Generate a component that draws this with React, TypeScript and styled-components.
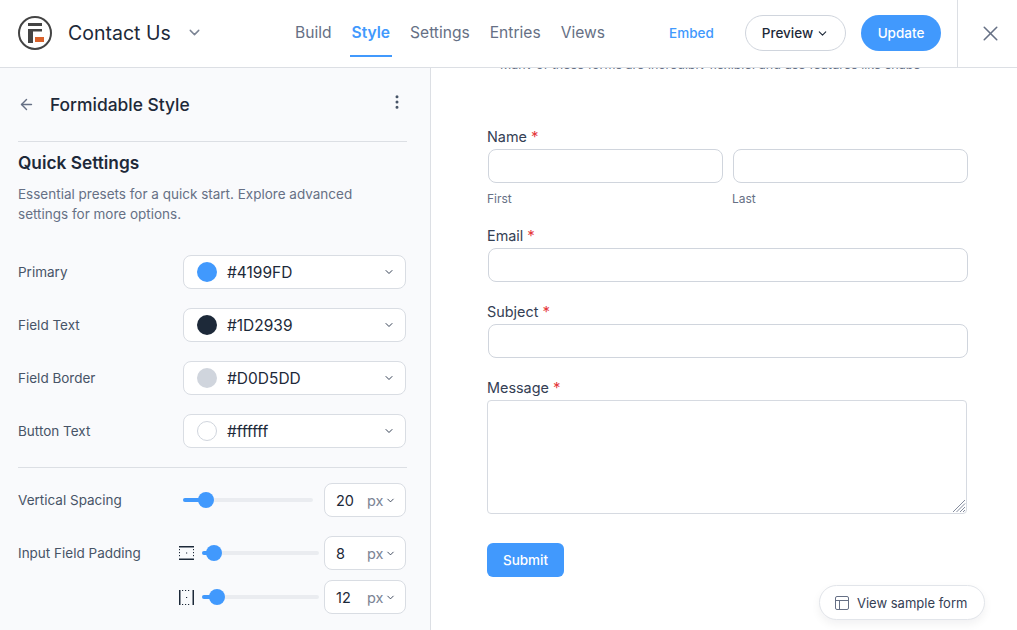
import * as React from 'react'
import styled, { createGlobalStyle } from 'styled-components'
import { ArrowLeft, ChevronDown, EllipsisVertical, X } from 'lucide-react'

const Global = createGlobalStyle`
  html, body {
    margin: 0;
    padding: 0;
    height: 100%;
    overflow: hidden;
    background: #fff;
    font-family: Inter, "Liberation Sans", sans-serif;
    color: #1d2939;
  }
  * { box-sizing: border-box; }
`

const Page = styled.div`
  width: 1017px;
  height: 630px;
  overflow: hidden;
  position: relative;
`
const Header = styled.header`
  height: 68px;
  display: flex;
  align-items: center;
  border-bottom: 1px solid #dcdfe4;
  background: #fff;
`
const Brand = styled.div`
  display: flex;
  align-items: center;
  width: 295px;
  padding-left: 18px;
  margin-bottom: 2px;
`
const FormName = styled.span`
  font-size: 19.5px;
  margin-left: 16px;
  color: #1d2939;
`
const NameChevron = styled(ChevronDown)`
  margin-left: 15px;
  color: #7b8494;
`
const Nav = styled.nav`
  display: flex;
  gap: 20px;
  height: 67px;
  width: 374px;
`
const NavItem = styled.a<{ $active?: boolean }>`
  display: flex;
  align-items: center;
  height: 50px;
  margin: 7px -2px 0;
  padding: 3px 2px 0;
  font-size: 15.6px;
  font-weight: ${p => (p.$active ? 600 : 400)};
  color: ${p => (p.$active ? '#4199fd' : '#667085')};
  border-bottom: 2px solid ${p => (p.$active ? '#4199fd' : 'transparent')};
`
const Actions = styled.div`
  display: flex;
  align-items: center;
  height: 67px;
  margin-bottom: 1px;
`
const Embed = styled.a`
  font-size: 13.5px;
  font-weight: 500;
  color: #4199fd;
  width: 76px;
`
const PillButton = styled.button`
  display: flex;
  align-items: center;
  justify-content: center;
  height: 36px;
  border-radius: 18px;
  font-family: inherit;
  font-size: 13.5px;
  font-weight: 500;
  padding: 0;
`
const PreviewButton = styled(PillButton)`
  width: 101px;
  gap: 3px;
  background: #fff;
  border: 1px solid #d0d5dd;
  color: #1d2939;
`
const UpdateButton = styled(PillButton)`
  width: 80px;
  margin-left: 15px;
  background: #4199fd;
  border: none;
  color: #fff;
`
const CloseCell = styled.div`
  display: flex;
  align-items: center;
  justify-content: center;
  width: 60px;
  height: 67px;
  margin-left: 16px;
  padding-left: 6px;
  border-left: 1px solid #dcdfe4;
  color: #667085;
`
const Body = styled.div`
  display: flex;
  height: 562px;
`
const Sidebar = styled.aside`
  width: 431px;
  padding: 0 23px 0 18px;
  background: #f9fafc;
  border-right: 1px solid #dcdfe4;
  overflow: hidden;
  flex: none;
`
const SideTitleRow = styled.div`
  display: flex;
  align-items: center;
  height: 74px;
  border-bottom: 1px solid #dcdfe4;
  color: #667085;
`
const SideTitle = styled.h2`
  flex: 1;
  margin: 0 0 0 15px;
  font-size: 17.4px;
  font-weight: 500;
  color: #1d2939;
`
const DotsIcon = styled(EllipsisVertical)`
  color: #475467;
  margin-right: 1px;
  margin-bottom: 5px;
`
const Heading = styled.h3`
  margin: 10px 0 0;
  font-size: 17.3px;
  line-height: 22px;
  font-weight: 600;
  color: #1d2939;
`
const Blurb = styled.p`
  margin: 10px 0 0;
  font-size: 13.5px;
  line-height: 20px;
  color: #667085;
`
const ColorList = styled.div`
  display: flex;
  flex-direction: column;
  gap: 19px;
  margin-top: 31px;
  padding-bottom: 19px;
  border-bottom: 1px solid #dcdfe4;
`
const Row = styled.div`
  display: flex;
  align-items: center;
`
const RowLabel = styled.span`
  width: 165px;
  flex: none;
  font-size: 13.5px;
  color: #475467;
`
const ColorField = styled.div`
  display: flex;
  align-items: center;
  width: 223px;
  height: 34px;
  padding: 0 10px 0 13px;
  background: #fff;
  border: 1px solid #d9dde3;
  border-radius: 8px;
  font-size: 15.5px;
  color: #1d2939;
`
const Swatch = styled.span<{ $color: string; $ring?: boolean }>`
  width: 20px;
  height: 20px;
  border-radius: 50%;
  background: ${p => p.$color};
  border: ${p => (p.$ring ? '1px solid #d0d5dd' : 'none')};
  margin-right: 10px;
`
const HexValue = styled.span`
  flex: 1;
`
const SmallChevron = styled(ChevronDown)`
  color: #344054;
  flex: none;
`
const SliderList = styled.div`
  display: flex;
  flex-direction: column;
  margin-top: 15px;
`
const SliderRow = styled(Row)<{ $gap: number }>`
  height: 34px;
  margin-bottom: ${p => p.$gap}px;
`
const IconSlot = styled.span`
  display: flex;
  width: 15px;
  margin: 0 8px 0 -4px;
  flex: none;
  color: #1d2939;
`
const Track = styled.div<{ $width: number }>`
  position: relative;
  width: ${p => p.$width}px;
  height: 4px;
  background: #eaecf0;
  border-radius: 2px;
  flex: none;
`
const Fill = styled.div`
  position: absolute;
  left: 0;
  top: 0;
  height: 4px;
  background: #4199fd;
  border-radius: 2px;
`
const Knob = styled.div`
  position: absolute;
  top: -6px;
  width: 16px;
  height: 16px;
  margin-left: -8px;
  background: #4199fd;
  border-radius: 50%;
`
const UnitField = styled.div`
  display: flex;
  align-items: center;
  width: 82px;
  height: 34px;
  margin: 0 1px 0 auto;
  padding: 0 6px 0 11px;
  background: #fff;
  border: 1px solid #d9dde3;
  border-radius: 8px;
  font-size: 14.5px;
  color: #1d2939;
`
const UnitValue = styled.span`
  width: 31px;
`
const Unit = styled.span`
  color: #7b8494;
  margin-right: 2px;
`
const Preview = styled.main`
  position: relative;
  flex: 1;
  overflow: hidden;
  padding: 0 50px 0 56px;
`
const ClippedText = styled.div`
  height: 1px;
  margin: 0 -9px 0 13px;
  overflow: hidden;
  font-size: 12.5px;
  line-height: 16px;
  color: #667085;
  white-space: nowrap;
`
const ClippedInner = styled.div`
  margin-top: -11px;
`
const Form = styled.form`
  display: flex;
  flex-direction: column;
  margin-top: 58px;
`
const FieldLabel = styled.label`
  display: block;
  height: 20px;
  font-size: 14.4px;
  line-height: 20px;
  color: #344054;
`
const Required = styled.span`
  color: #e5383b;
  font-size: 15px;
`
const Field = styled.div`
  margin-bottom: 20px;
`
const NameGrid = styled.div`
  display: grid;
  grid-template-columns: 235px 235px;
  gap: 10px;
  margin-bottom: 20px;
`
const TextBox = styled.div`
  height: 34px;
  margin: 2px -1px 0 1px;
  background: #fff;
  border: 1px solid #d0d5dd;
  border-radius: 8px;
`
const Hint = styled.div`
  margin-top: 8px;
  font-size: 12px;
  line-height: 15px;
  color: #667085;
`
const MessageBox = styled.div`
  position: relative;
  height: 114px;
  width: 480px;
  margin: 2px 0 29px;
  background: #fff;
  border: 1.5px solid #d6dae1;
  border-radius: 4px;
`
const Grip = styled.svg`
  position: absolute;
  right: 0;
  bottom: 0;
  color: #667085;
`
const Submit = styled.button`
  width: 77px;
  height: 34px;
  background: #4199fd;
  border: none;
  border-radius: 6px;
  color: #fff;
  font-family: inherit;
  font-size: 13.5px;
  font-weight: 500;
`
const SamplePill = styled.button`
  position: absolute;
  left: 388px;
  top: 517px;
  display: flex;
  align-items: center;
  gap: 8px;
  width: 166px;
  height: 35px;
  padding: 0 0 0 15px;
  background: #fff;
  border: 1px solid #e2e5ea;
  border-radius: 18px;
  box-shadow: 0 4px 10px rgba(16, 24, 40, 0.06);
  font-family: inherit;
  font-size: 13px;
  color: #344054;
  white-space: nowrap;
`

const Logo = () => (
  <svg width="34" height="34" viewBox="0 0 34 34">
    <circle cx="17" cy="17" r="16" fill="#fff" stroke="#444" strokeWidth="2" />
    <path d="M10 7h14v3H10z M10 13h14v2.5H15V27h-5z" fill="#444" />
    <path d="M17 21h9v5h-9z" fill="#d9622b" />
  </svg>
)

const VerticalPaddingIcon = () => (
  <svg width="15" height="14" viewBox="0 0 15 14" fill="none" stroke="currentColor">
    <path d="M0 .75h15M0 13.25h15" strokeWidth="1.5" />
    <path d="M.5 3v8M14.5 3v8" strokeDasharray="1.2 1.8" />
    <path d="M7 7h1.2" />
  </svg>
)

const HorizontalPaddingIcon = () => (
  <svg width="15" height="15" viewBox="0 0 15 15" fill="none" stroke="currentColor">
    <path d="M.75 0v15M14.25 0v15" strokeWidth="1.5" />
    <path d="M3 .5h9M3 14.5h9" strokeDasharray="1.2 1.8" />
    <path d="M7 7.5h1.2" />
  </svg>
)

const LayoutIcon = () => (
  <svg width="14" height="14" viewBox="0 0 14 14" fill="none" stroke="#667085" strokeWidth="1">
    <rect x="0.5" y="0.5" width="13" height="13" rx="1.5" />
    <path d="M.5 4.5h13M4.5 4.5v9" />
  </svg>
)

const colors = [
  { label: 'Primary', color: '#4199FD' },
  { label: 'Field Text', color: '#1D2939' },
  { label: 'Field Border', color: '#D0D5DD' },
  { label: 'Button Text', color: '#ffffff', ring: true },
]

const navItems = ['Build', 'Style', 'Settings', 'Entries', 'Views']

const UnitInput = ({ value }: { value: number }) => (
  <UnitField>
    <UnitValue>{value}</UnitValue>
    <Unit>px</Unit>
    <SmallChevron size={11} />
  </UnitField>
)

const Slider = ({ width, pos }: { width: number; pos: number }) => (
  <Track $width={width}>
    <Fill style={{ width: pos }} />
    <Knob style={{ left: pos }} />
  </Track>
)

export default function App() {
  return (
    <Page>
      <Global />
      <Header>
        <Brand>
          <Logo />
          <FormName>Contact Us</FormName>
          <NameChevron size={17} />
        </Brand>
        <Nav>
          {navItems.map(n => (
            <NavItem key={n} $active={n === 'Style'}>
              {n}
            </NavItem>
          ))}
        </Nav>
        <Actions>
          <Embed>Embed</Embed>
          <PreviewButton>
            Preview <ChevronDown size={13} />
          </PreviewButton>
          <UpdateButton>Update</UpdateButton>
          <CloseCell>
            <X size={25} strokeWidth={1.5} />
          </CloseCell>
        </Actions>
      </Header>
      <Body>
        <Sidebar>
          <SideTitleRow>
            <ArrowLeft size={17} />
            <SideTitle>Formidable Style</SideTitle>
            <DotsIcon size={18} />
          </SideTitleRow>
          <Heading>Quick Settings</Heading>
          <Blurb>
            Essential presets for a quick start. Explore advanced
            <br />
            settings for more options.
          </Blurb>
          <ColorList>
            {colors.map(c => (
              <Row key={c.label}>
                <RowLabel>{c.label}</RowLabel>
                <ColorField>
                  <Swatch $color={c.color} $ring={c.ring} />
                  <HexValue>{c.color}</HexValue>
                  <SmallChevron size={12} />
                </ColorField>
              </Row>
            ))}
          </ColorList>
          <SliderList>
            <SliderRow $gap={19}>
              <RowLabel>Vertical Spacing</RowLabel>
              <Slider width={130} pos={23} />
              <UnitInput value={20} />
            </SliderRow>
            <SliderRow $gap={10}>
              <RowLabel>Input Field Padding</RowLabel>
              <IconSlot>
                <VerticalPaddingIcon />
              </IconSlot>
              <Slider width={117} pos={12} />
              <UnitInput value={8} />
            </SliderRow>
            <SliderRow $gap={0}>
              <RowLabel />
              <IconSlot>
                <HorizontalPaddingIcon />
              </IconSlot>
              <Slider width={117} pos={15} />
              <UnitInput value={12} />
            </SliderRow>
          </SliderList>
        </Sidebar>
        <Preview>
          <ClippedText>
            <ClippedInner>Many of these forms are incredibly flexible, and use features like shape</ClippedInner>
          </ClippedText>
          <Form>
            <FieldLabel>
              Name <Required>*</Required>
            </FieldLabel>
            <NameGrid>
              <div>
                <TextBox />
                <Hint>First</Hint>
              </div>
              <div>
                <TextBox />
                <Hint>Last</Hint>
              </div>
            </NameGrid>
            <Field>
              <FieldLabel>
                Email <Required>*</Required>
              </FieldLabel>
              <TextBox />
            </Field>
            <Field>
              <FieldLabel>
                Subject <Required>*</Required>
              </FieldLabel>
              <TextBox />
            </Field>
            <FieldLabel>
              Message <Required>*</Required>
            </FieldLabel>
            <MessageBox>
              <Grip width="14" height="14" viewBox="0 0 14 14" stroke="currentColor" strokeWidth="0.8">
                <path d="M1 13L13 1M4.5 13L13 4.5M8 13l5-5M11 13l2-2" />
              </Grip>
            </MessageBox>
            <div>
              <Submit type="button">Submit</Submit>
            </div>
          </Form>
          <SamplePill type="button">
            <LayoutIcon />
            View sample form
          </SamplePill>
        </Preview>
      </Body>
    </Page>
  )
}
